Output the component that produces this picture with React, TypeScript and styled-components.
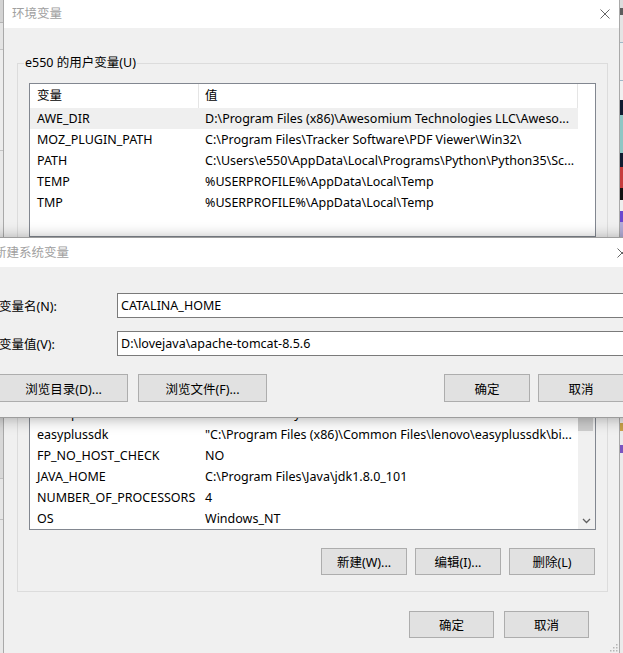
import React from "react";
import styled, { createGlobalStyle } from "styled-components";

const FONT = `"Noto Sans", "Noto Sans CJK SC", sans-serif`;

const GlobalStyle = createGlobalStyle`
  html, body { margin: 0; padding: 0; }
  body {
    width: 623px; height: 653px; overflow: hidden;
    font-family: ${FONT}; font-size: 12.5px; color: #000; background: #dcdcdc;
  }
  * { box-sizing: border-box; }
`;

const Screen = styled.div`
  position: relative;
  width: 623px;
  height: 653px;
  overflow: hidden;
  display: flex;
`;

const Strip = styled.div<{ $w: number }>`
  width: ${(p) => p.$w}px;
  flex: none;
  display: flex;
  flex-direction: column;
  background: #e6e6e6;
`;

const Seg = styled.div<{ $h: number; $c: string }>`
  height: ${(p) => p.$h}px;
  flex: none;
  background: ${(p) => p.$c};
`;

const MainWindow = styled.div`
  position: relative;
  width: 617px;
  flex: none;
  height: 100%;
  background: #f0f0f0;
  border-left: 1px solid #a9a9a9;
  border-right: 1px solid #a9a9a9;
  display: flex;
  flex-direction: column;
`;

const TitleBar = styled.div<{ $h: number; $pl: number; $pr: number }>`
  height: ${(p) => p.$h}px;
  flex: none;
  background: #fff;
  display: flex;
  align-items: center;
  justify-content: space-between;
  padding: 0 ${(p) => p.$pr}px 0 ${(p) => p.$pl}px;
  white-space: nowrap;
`;

const TitleText = styled.span`
  color: #a0a0a0;
  font-size: 12.5px;
  line-height: 16px;
`;

const CloseIcon = () => (
  <svg width="10" height="10" viewBox="0 0 10 10" style={{ flex: "none" }}>
    <path d="M0.5 0.5 L9.5 9.5 M9.5 0.5 L0.5 9.5" stroke="#666" strokeWidth="1" fill="none" />
  </svg>
);

const Body = styled.div`
  flex: 1;
  display: flex;
  flex-direction: column;
  padding: 27px 11px 0 13px;
`;

const Group = styled.fieldset`
  margin: 0;
  padding: 0 11px 16px 11px;
  border: 1px solid #dcdcdc;
  min-width: 0;
  & + & {
    margin-top: 15px;
  }
`;

const Legend = styled.legend`
  margin-left: -5px;
  padding: 0 1px;
  font-size: 12.5px;
  line-height: 16px;
`;

const ListBox = styled.div<{ $h: number; $mt: number }>`
  height: ${(p) => p.$h}px;
  margin-top: ${(p) => p.$mt}px;
  border: 1px solid #828790;
  background: #fff;
  display: flex;
  overflow: hidden;
`;

const ListMain = styled.div`
  flex: 1;
  min-width: 0;
  display: flex;
  flex-direction: column;
`;

const HeaderRow = styled.div`
  display: grid;
  grid-template-columns: 169px 379px;
  height: 24px;
  flex: none;
`;

const HeaderCell = styled.div<{ $pl: number }>`
  padding-left: ${(p) => p.$pl}px;
  line-height: 24px;
  border-right: 1px solid #e5e5e5;
  white-space: nowrap;
`;

const Row = styled.div<{ $sel?: boolean }>`
  display: grid;
  grid-template-columns: 169px 379px;
  width: 548px;
  height: 21px;
  flex: none;
  background: ${(p) => (p.$sel ? "#efefef" : "transparent")};
`;

const Cell = styled.div<{ $pl: number }>`
  padding-left: ${(p) => p.$pl}px;
  line-height: 21px;
  white-space: nowrap;
  overflow: hidden;
`;

const ScrollBar = styled.div`
  width: 17px;
  flex: none;
  background: #f0f0f0;
  display: flex;
  flex-direction: column;
`;

const ScrollArrow = styled.div`
  height: 17px;
  flex: none;
  display: flex;
  align-items: center;
  justify-content: center;
`;

const Thumb = styled.div<{ $h: number }>`
  height: ${(p) => p.$h}px;
  margin: 0 2px 0 0;
  background: #cdcdcd;
  flex: none;
`;

const Track = styled.div`
  flex: 1;
`;

const ButtonRow = styled.div<{ $mt: number; $pr?: number; $gap: number }>`
  display: flex;
  justify-content: flex-end;
  gap: ${(p) => p.$gap}px;
  margin-top: ${(p) => p.$mt}px;
  padding-right: ${(p) => p.$pr ?? 0}px;
`;

const Button = styled.button<{ $w: number; $h: number }>`
  width: ${(p) => p.$w}px;
  height: ${(p) => p.$h}px;
  flex: none;
  margin: 0;
  padding: 0;
  background: #e1e1e1;
  border: 1px solid #adadad;
  border-radius: 0;
  font-family: ${FONT};
  font-size: 12.5px;
  color: #000;
  white-space: nowrap;
`;

const Grip = styled.svg`
  position: absolute;
  right: 1px;
  bottom: 1px;
`;

const Dialog = styled.div`
  position: absolute;
  top: 237px;
  left: -12px;
  width: 657px;
  height: 181px;
  background: #f0f0f0;
  border: 1px solid #9d9d9d;
  box-shadow: 0 1px 14px rgba(0, 0, 0, 0.32);
  display: flex;
  flex-direction: column;
`;

const DialogBody = styled.div`
  flex: 1;
  padding: 26px 20px 0 10px;
  display: flex;
  flex-direction: column;
`;

const FieldRow = styled.div<{ $mt: number }>`
  display: grid;
  grid-template-columns: 118px 1fr;
  align-items: center;
  height: 25px;
  margin-top: ${(p) => p.$mt}px;
`;

const FieldLabel = styled.label`
  white-space: nowrap;
`;

const TextBox = styled.input`
  height: 25px;
  width: 100%;
  margin: 0;
  padding: 0 0 0 3px;
  border: 1px solid #7a7a7a;
  border-radius: 0;
  background: #fff;
  font-family: ${FONT};
  font-size: 12.5px;
  color: #000;
  outline: none;
`;

const DialogButtons = styled.div`
  display: flex;
  justify-content: space-between;
  margin-top: 18px;
`;

const BtnGroup = styled.div<{ $gap: number }>`
  display: flex;
  gap: ${(p) => p.$gap}px;
`;

const userVars: [string, string][] = [
  ["AWE_DIR", "D:\\Program Files (x86)\\Awesomium Technologies LLC\\Aweso..."],
  ["MOZ_PLUGIN_PATH", "C:\\Program Files\\Tracker Software\\PDF Viewer\\Win32\\"],
  ["PATH", "C:\\Users\\e550\\AppData\\Local\\Programs\\Python\\Python35\\Sc..."],
  ["TEMP", "%USERPROFILE%\\AppData\\Local\\Temp"],
  ["TMP", "%USERPROFILE%\\AppData\\Local\\Temp"],
];

const sysVars: [string, string][] = [
  ["asl.log", "Destination=file"],
  ["CLASSPATH", ".;%JAVA_HOME%\\lib\\dt.jar;%JAVA_HOME%\\lib\\tools.jar;"],
  ["ComSpec", "C:\\WINDOWS\\system32\\cmd.exe"],
  ["easyplussdk", "\"C:\\Program Files (x86)\\Common Files\\lenovo\\easyplussdk\\bi..."],
  ["FP_NO_HOST_CHECK", "NO"],
  ["JAVA_HOME", "C:\\Program Files\\Java\\jdk1.8.0_101"],
  ["NUMBER_OF_PROCESSORS", "4"],
  ["OS", "Windows_NT"],
];

const leftSegs: [number, string][] = [
  [22, "#d4d4d4"], [1, "#b4b4b4"], [26, "#e4e4e4"], [1, "#c4c4c4"], [100, "#ededed"],
  [1, "#c4c4c4"], [86, "#e9e9e9"], [180, "#ececec"], [1, "#c0c0c0"], [60, "#d8d8d8"],
  [1, "#c0c0c0"], [40, "#e6e6e6"], [1, "#c0c0c0"], [133, "#e8e8e8"],
];

const rightSegs: [number, string][] = [
  [8, "#dcdcdc"], [7, "#5d5d5d"], [27, "#e4e4e4"], [1, "#9fb6c6"], [37, "#ededed"],
  [1, "#9fb6c6"], [19, "#f0f0f0"], [15, "#0f1b30"], [38, "#8ec6c4"], [14, "#0f1b30"],
  [21, "#c63d3d"], [12, "#121212"], [11, "#efefef"], [11, "#6a47cf"], [15, "#b3acd6"],
  [186, "#ebebeb"], [8, "#c9a24a"], [14, "#ebebeb"], [8, "#7a55c0"], [201, "#ebebeb"],
];

function VarList({ rows, height, selected, scroll }: { rows: [string, string][]; height: number; selected?: number; scroll?: boolean }) {
  return (
    <ListBox $h={height} $mt={12}>
      <ListMain>
        <HeaderRow>
          <HeaderCell $pl={7}>变量</HeaderCell>
          <HeaderCell $pl={6}>值</HeaderCell>
        </HeaderRow>
        {rows.map(([k, v], i) => (
          <Row key={k} $sel={i === selected}>
            <Cell $pl={7}>{k}</Cell>
            <Cell $pl={6}>{v}</Cell>
          </Row>
        ))}
      </ListMain>
      {scroll && (
        <ScrollBar>
          <ScrollArrow>
            <svg width="9" height="6" viewBox="0 0 9 6">
              <path d="M1 5 L4.5 1.5 L8 5" stroke="#606060" strokeWidth="1.3" fill="none" />
            </svg>
          </ScrollArrow>
          <Thumb $h={77} />
          <Track />
          <ScrollArrow>
            <svg width="9" height="6" viewBox="0 0 9 6">
              <path d="M1 1 L4.5 4.5 L8 1" stroke="#606060" strokeWidth="1.3" fill="none" />
            </svg>
          </ScrollArrow>
        </ScrollBar>
      )}
    </ListBox>
  );
}

export default function App() {
  return (
    <>
      <GlobalStyle />
      <Screen>
        <Strip $w={3}>
          {leftSegs.map(([h, c], i) => (
            <Seg key={i} $h={h} $c={c} />
          ))}
        </Strip>
        <MainWindow>
          <TitleBar $h={28} $pl={8} $pr={9}>
            <TitleText>环境变量</TitleText>
            <CloseIcon />
          </TitleBar>
          <Body>
            <Group>
              <Legend>e550 的用户变量(U)</Legend>
              <VarList rows={userVars} height={154} selected={0} />
              <ButtonRow $mt={12} $pr={1} $gap={8}>
                <Button $w={86} $h={27}>新建(N)...</Button>
                <Button $w={86} $h={27}>编辑(E)...</Button>
                <Button $w={86} $h={27}>删除(D)</Button>
              </ButtonRow>
            </Group>
            <Group>
              <Legend>系统变量(S)</Legend>
              <VarList rows={sysVars} height={194} scroll />
              <ButtonRow $mt={18} $pr={1} $gap={8}>
                <Button $w={86} $h={27}>新建(W)...</Button>
                <Button $w={86} $h={27}>编辑(I)...</Button>
                <Button $w={86} $h={27}>删除(L)</Button>
              </ButtonRow>
            </Group>
            <ButtonRow $mt={19} $pr={19} $gap={10}>
              <Button $w={85} $h={27}>确定</Button>
              <Button $w={85} $h={27}>取消</Button>
            </ButtonRow>
          </Body>
          <Grip width="9" height="9" viewBox="0 0 9 9">
            {[
              [7, 1], [4, 4], [7, 4], [1, 7], [4, 7], [7, 7],
            ].map(([x, y], i) => (
              <rect key={i} x={x} y={y} width="1.5" height="1.5" fill="#b5b5b5" />
            ))}
          </Grip>
        </MainWindow>
        <Strip $w={3}>
          {rightSegs.map(([h, c], i) => (
            <Seg key={i} $h={h} $c={c} />
          ))}
        </Strip>
        <Dialog>
          <TitleBar $h={29} $pl={5} $pr={17}>
            <TitleText>新建系统变量</TitleText>
            <CloseIcon />
          </TitleBar>
          <DialogBody>
            <FieldRow $mt={0}>
              <FieldLabel>变量名(N):</FieldLabel>
              <TextBox readOnly value="CATALINA_HOME" />
            </FieldRow>
            <FieldRow $mt={13}>
              <FieldLabel>变量值(V):</FieldLabel>
              <TextBox readOnly value="D:\lovejava\apache-tomcat-8.5.6" />
            </FieldRow>
            <DialogButtons>
              <BtnGroup $gap={10}>
                <Button $w={129} $h={28}>浏览目录(D)...</Button>
                <Button $w={129} $h={28}>浏览文件(F)...</Button>
              </BtnGroup>
              <BtnGroup $gap={8}>
                <Button $w={86} $h={28}>确定</Button>
                <Button $w={86} $h={28}>取消</Button>
              </BtnGroup>
            </DialogButtons>
          </DialogBody>
        </Dialog>
      </Screen>
    </>
  );
}
